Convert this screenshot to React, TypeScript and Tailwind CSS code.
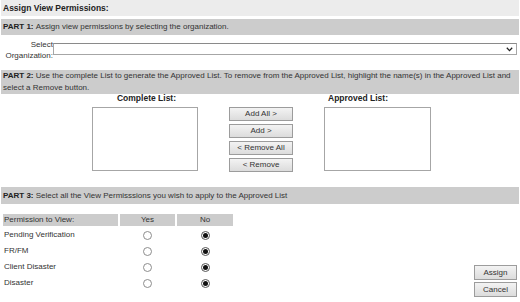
const permissions = ['Pending Verification', 'FR/FM', 'Client Disaster', 'Disaster'];
const moveButtons = ['Add All >', 'Add >', '< Remove All', '< Remove'];

function Radio({ checked }: { checked?: boolean }) {
  return (
    <span
      className={`inline-flex h-[9px] w-[9px] items-center justify-center rounded-full border bg-white ${
        checked ? 'border-[#555]' : 'border-[#8d8d8d]'
      }`}
    >
      {checked && <span className="h-[5px] w-[5px] rounded-full bg-[#111]" />}
    </span>
  );
}

function GrayButton({ label, className = '' }: { label: string; className?: string }) {
  return (
    <button
      type="button"
      className={`flex items-center justify-center border border-[#9c9c9c] bg-gradient-to-b from-[#f3f3f3] to-[#dcdcdc] text-[8px] text-[#333] ${className}`}
    >
      {label}
    </button>
  );
}

export default function App() {
  return (
    <main className="h-[302px] w-[520px] overflow-hidden bg-white px-[1px] font-['Liberation_Sans',Arial,sans-serif] text-[8px] leading-[12px] text-[#333]">
      <div className="flex h-[16px] items-center bg-[#ececec] pl-[2px] text-[8.5px] font-bold text-[#222]">
        Assign View Permissions:
      </div>

      <div className="mt-[3px] flex h-[16px] items-center bg-[#cccccc] pl-[2px]">
        <span className="font-bold text-[#222]">PART 1:</span>&nbsp;Assign view permissions by selecting the organization.
      </div>

      <div className="mt-[4px] flex pr-[2px]">
        <div className="w-[52px] text-right leading-[11px]">
          Select
          <br />
          Organization:
        </div>
        <div className="mt-[4px] flex h-[12px] flex-1 items-center justify-end border border-[#a6a6a6] border-t-[#8a8a8a] bg-white pr-[3px]">
          <svg width="7" height="5" viewBox="0 0 7 5">
            <path d="M0.8 0.8 L3.5 3.6 L6.2 0.8" fill="none" stroke="#222" strokeWidth="1.3" />
          </svg>
        </div>
      </div>

      <p className="mt-[9px] h-[24px] bg-[#cccccc] pl-[2px] pr-[6px]">
        <b className="text-[#222]">PART 2:</b> Use the complete List to generate the Approved List. To remove from the Approved
        List, highlight the name(s) in the Approved List and select a Remove button.
      </p>

      <div className="flex items-start">
        <div className="ml-[90px] flex w-[107px] flex-col items-center">
          <div className="h-[9px] pl-[4px] text-[8.5px] leading-[9px] font-bold text-[#222]">Complete List:</div>
          <div className="mt-[4px] h-[64px] w-[106px] border border-[#a6a6a6] bg-white" />
        </div>
        <div className="ml-[31px] mt-[13px] flex w-[64px] flex-col gap-[3px]">
          {moveButtons.map((b) => (
            <GrayButton key={b} label={b} className="h-[14px] w-[64px]" />
          ))}
        </div>
        <div className="ml-[31px] flex flex-col">
          <div className="h-[9px] pl-[4px] text-[8.5px] leading-[9px] font-bold text-[#222]">Approved List:</div>
          <div className="mt-[4px] h-[64px] w-[107px] border border-[#a6a6a6] bg-white" />
        </div>
      </div>

      <div className="mt-[15px] flex h-[17px] items-center bg-[#cccccc] pl-[2px]">
        <span className="font-bold text-[#222]">PART 3:</span>&nbsp;Select all the View Permisssions you wish to apply to the Approved List
      </div>

      <div className="mt-[10px] flex items-start pr-[2px]">
        <div className="ml-[2px] grid grid-cols-[115px_55px_56px] gap-x-[2px]">
          <div className="mb-[1px] h-[12px] bg-[#cccccc] pl-[1px] leading-[12px]">Permission to View:</div>
          <div className="mb-[1px] h-[12px] bg-[#cccccc] text-center leading-[12px]">Yes</div>
          <div className="mb-[1px] h-[12px] bg-[#cccccc] text-center leading-[12px]">No</div>
          {permissions.map((p) => (
            <div key={p} className="contents">
              <div className="flex h-[16px] items-center pl-[1px]">{p}</div>
              <div className="flex h-[16px] items-center justify-center">
                <Radio />
              </div>
              <div className="flex h-[16px] items-center justify-center">
                <Radio checked />
              </div>
            </div>
          ))}
        </div>
        <div className="ml-auto mt-[51px] flex flex-col gap-[2px]">
          <GrayButton label="Assign" className="h-[15px] w-[43px]" />
          <GrayButton label="Cancel" className="h-[15px] w-[43px]" />
        </div>
      </div>
    </main>
  );
}
